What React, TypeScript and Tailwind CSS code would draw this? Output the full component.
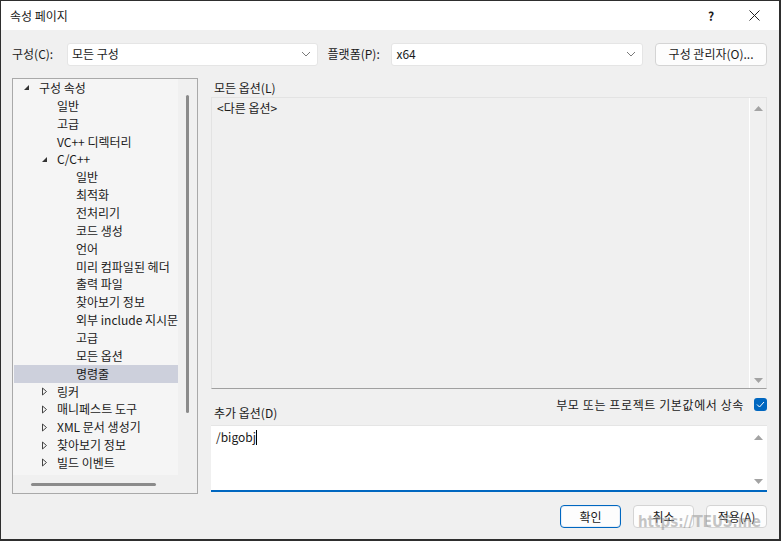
import React from 'react';

const font = { fontFamily: '"Noto Sans CJK KR", "Noto Sans", sans-serif' };

type Node = { label: string; level: number; arrow?: 'open' | 'closed'; selected?: boolean };

const tree: Node[] = [
  { label: '구성 속성', level: 0, arrow: 'open' },
  { label: '일반', level: 1 },
  { label: '고급', level: 1 },
  { label: 'VC++ 디렉터리', level: 1 },
  { label: 'C/C++', level: 1, arrow: 'open' },
  { label: '일반', level: 2 },
  { label: '최적화', level: 2 },
  { label: '전처리기', level: 2 },
  { label: '코드 생성', level: 2 },
  { label: '언어', level: 2 },
  { label: '미리 컴파일된 헤더', level: 2 },
  { label: '출력 파일', level: 2 },
  { label: '찾아보기 정보', level: 2 },
  { label: '외부 include 지시문', level: 2 },
  { label: '고급', level: 2 },
  { label: '모든 옵션', level: 2 },
  { label: '명령줄', level: 2, selected: true },
  { label: '링커', level: 1, arrow: 'closed' },
  { label: '매니페스트 도구', level: 1, arrow: 'closed' },
  { label: 'XML 문서 생성기', level: 1, arrow: 'closed' },
  { label: '찾아보기 정보', level: 1, arrow: 'closed' },
  { label: '빌드 이벤트', level: 1, arrow: 'closed' },
];

function Chevron() {
  return (
    <svg width="10" height="6" viewBox="0 0 10 6" className="shrink-0">
      <path d="M1 1 L5 5 L9 1" fill="none" stroke="#7a7a7a" strokeWidth="1" />
    </svg>
  );
}

function Arrow({ kind }: { kind: 'open' | 'closed' }) {
  if (kind === 'open') {
    return (
      <svg width="7" height="7" viewBox="0 0 7 7">
        <path d="M6 1 L6 6 L1 6 Z" fill="#333" />
      </svg>
    );
  }
  return (
    <svg width="7" height="9" viewBox="0 0 7 9">
      <path d="M1.5 1 L5.5 4.5 L1.5 8 Z" fill="none" stroke="#444" strokeWidth="1" />
    </svg>
  );
}

function TriUp() {
  return (
    <svg width="9" height="5" viewBox="0 0 9 5">
      <path d="M0 5 L4.5 0 L9 5 Z" fill="#a3a3a3" />
    </svg>
  );
}

function TriDown() {
  return (
    <svg width="9" height="5" viewBox="0 0 9 5">
      <path d="M0 0 L4.5 5 L9 0 Z" fill="#a3a3a3" />
    </svg>
  );
}

function Combo({ value, width }: { value: string; width: string }) {
  return (
    <div className={`${width} h-[23px] bg-white border border-[#e5e5e5] rounded-[3px] flex items-center justify-between pl-[4px] pr-[6px]`}>
      <span>{value}</span>
      <Chevron />
    </div>
  );
}

function Button({ children, primary }: { children: React.ReactNode; primary?: boolean }) {
  return (
    <div
      className={`w-[61px] h-[23px] rounded-[4px] bg-[#fdfdfd] flex items-center justify-center ${
        primary ? 'border border-[#0067c0] shadow-[inset_0_0_0_1px_#e6eef8]' : 'border border-[#d4d4d4]'
      }`}
    >
      {children}
    </div>
  );
}

export default function App() {
  return (
    <div
      style={font}
      className="relative w-[781px] h-[541px] bg-[#f0f0f0] border-t border-l border-r-2 border-b-2 border-[#2e2e2e] flex flex-col text-[12px] text-[#1a1a1a] overflow-hidden"
    >
      {/* Title bar */}
      <div className="h-[29px] bg-white flex items-center pl-[9px] shrink-0">
        <span className="flex-1 text-[12px]">속성 페이지</span>
        <span className="w-[14px] text-center font-bold text-[12px] mr-[31px]">?</span>
        <svg width="11" height="11" viewBox="0 0 11 11" className="mr-[19px]">
          <path d="M0.5 0.5 L10.5 10.5 M10.5 0.5 L0.5 10.5" stroke="#222" strokeWidth="1" />
        </svg>
      </div>

      <div className="flex-1 flex flex-col pl-[11px] pr-[12px]">
        {/* Config row */}
        <div className="flex items-center mt-[12px] h-[24px]">
          <span className="w-[55px]">구성(C):</span>
          <Combo value="모든 구성" width="w-[251px]" />
          <span className="ml-[10px] w-[64px]">플랫폼(P):</span>
          <Combo value="x64" width="w-[252px]" />
          <div className="ml-[12px] w-[112px] h-[23px] rounded-[4px] bg-[#fdfdfd] border border-[#d4d4d4] flex items-center justify-center">
            구성 관리자(O)...
          </div>
        </div>

        {/* Main */}
        <div className="flex mt-[12px] h-[416px]">
          {/* Tree */}
          <div className="w-[186px] border border-[#a9a9a9] bg-[#f0f0f0] flex flex-col">
            <div className="flex flex-1">
              <div className="w-[165px] h-[396px] bg-[#f5f5f5] overflow-hidden">
                {tree.map((n, i) => (
                  <div
                    key={i}
                    className={`h-[17.86px] flex items-center whitespace-nowrap ml-[1px] ${n.selected ? 'bg-[#cdd0dc]' : ''}`}
                  >
                    <span
                      className={`flex items-center justify-center w-[12px] shrink-0 ${
                        n.level === 0 ? 'ml-[6px]' : n.level === 1 ? 'ml-[24px]' : 'ml-[43px]'
                      }`}
                    >
                      {n.arrow && <Arrow kind={n.arrow} />}
                    </span>
                    <span className="ml-[7px]">{n.label}</span>
                  </div>
                ))}
              </div>
              <div className="flex-1 flex justify-center pt-[16px]">
                <div className="w-[3px] h-[318px] bg-[#8b8b8b] rounded-[2px]" />
              </div>
            </div>
            <div className="h-[18px] flex items-center pl-[18px]">
              <div className="w-[125px] h-[3px] bg-[#8b8b8b] rounded-[2px]" />
            </div>
          </div>

          {/* Right panel */}
          <div className="ml-[13px] flex-1 flex flex-col">
            <div className="h-[19px] flex items-center pl-[3px]">모든 옵션(L)</div>
            <div className="h-[292px] border border-[#e3e3e3] border-b-[#a0a0a0] flex">
              <div className="flex-1 pl-[5px] pt-[1px]">&lt;다른 옵션&gt;</div>
              <div className="w-[17px] border-l border-white flex flex-col items-center justify-between pt-[8px] pb-[5px]">
                <TriUp />
                <TriDown />
              </div>
            </div>
            <div className="h-[36px] flex items-center pl-[3px]">
              <span className="flex-1 pt-[12px]">추가 옵션(D)</span>
              <span className="mr-[10px] pb-[4px] tracking-[0.6px]">부모 또는 프로젝트 기본값에서 상속</span>
              <div className="w-[13px] h-[13px] rounded-[3px] bg-[#0067c0] flex items-center justify-center mb-[5px]">
                <svg width="9" height="7" viewBox="0 0 9 7">
                  <path d="M1 3.5 L3.5 6 L8 1" fill="none" stroke="white" strokeWidth="1" />
                </svg>
              </div>
            </div>
            <div className="h-[67px] bg-white border-t border-[#e5e5e5] border-b-2 border-b-[#0067c0] flex">
              <div className="flex-1 pl-[5px] pt-[2px] flex items-start">
                <span>/bigobj</span>
                <span className="w-[1px] h-[15px] bg-black mt-[2px]" />
              </div>
              <div className="w-[17px] flex flex-col items-center justify-between pt-[9px] pb-[6px]">
                <TriUp />
                <TriDown />
              </div>
            </div>
          </div>
        </div>

        {/* Buttons */}
        <div className="flex justify-end gap-[12px] mt-[11px]">
          <Button primary>확인</Button>
          <Button>취소</Button>
          <Button>적용(A)</Button>
        </div>
      </div>

      {/* Watermark */}
      <div
        className="absolute left-[637px] top-[512px] text-[15px] leading-[18px] font-bold text-[#8c8c8c]/50 tracking-[0px] pointer-events-none"
        style={{ fontFamily: '"DejaVu Sans Condensed", "DejaVu Sans", sans-serif' }}
      >
        https://TEUS.me
      </div>
    </div>
  );
}
